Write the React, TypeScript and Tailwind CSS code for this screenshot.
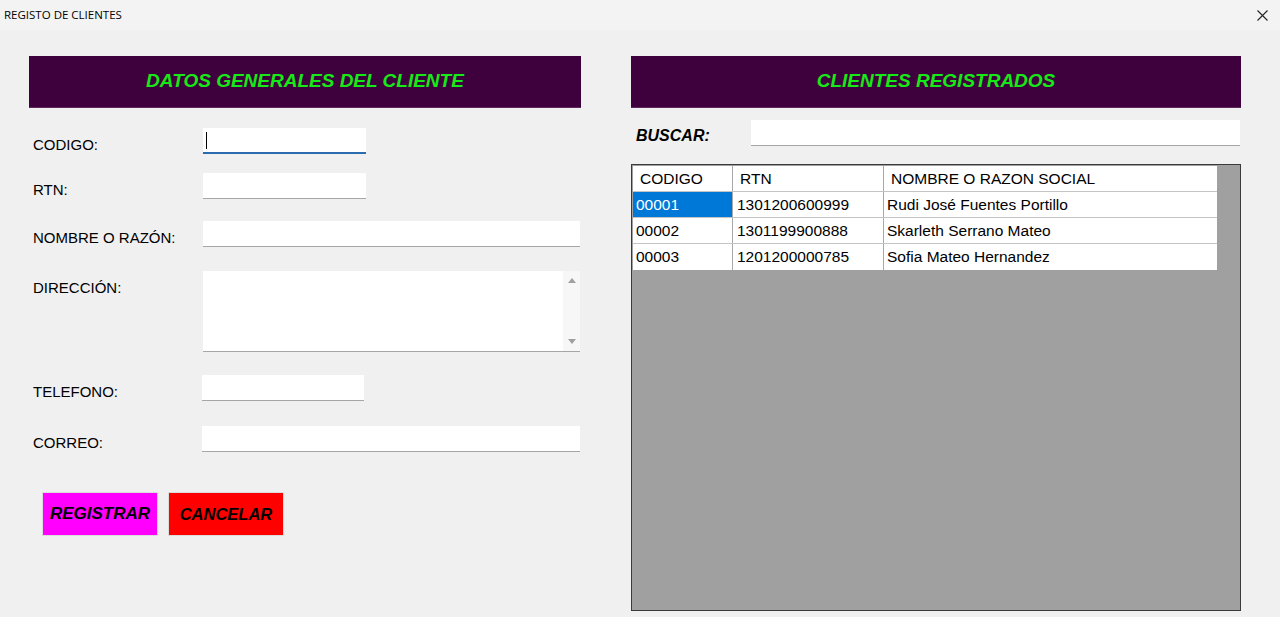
import React from "react";

const FONT = { fontFamily: '"Liberation Sans", Arial, sans-serif' };

function Field({ w, blue, ml = 0 }: { w: number; blue?: boolean; ml?: number }) {
  return (
    <div
      className={`h-[26px] bg-white ${blue ? "border-b-2 border-[#2b6cb0]" : "border-b border-[#a6a6a6]"} relative`}
      style={{ width: w, marginLeft: ml }}
    >
      {blue && <div className="absolute left-[3px] top-[4px] w-px h-[17px] bg-black" />}
    </div>
  );
}

function Row({ label, children, mt }: { label: string; children: React.ReactNode; mt: string }) {
  return (
    <div className={`flex items-start ${mt}`}>
      <div className="w-[174px] pl-[4px] pt-[8px] text-[15px] leading-[18px] text-black">{label}</div>
      {children}
    </div>
  );
}

const rows = [
  ["00001", "1301200600999", "Rudi José Fuentes Portillo"],
  ["00002", "1301199900888", "Skarleth Serrano Mateo"],
  ["00003", "1201200000785", "Sofia Mateo Hernandez"],
];

export default function App() {
  return (
    <div className="w-[1280px] h-[617px] bg-[#f0f0f0] overflow-hidden flex flex-col" style={FONT}>
      <div className="h-[30px] bg-[#f3f3f3] flex items-center justify-between pl-[4px] pr-[12px]">
        <span className="text-[11.5px] text-black" style={{ fontFamily: '"Open Sans", "Liberation Sans", sans-serif' }}>
          REGISTO DE CLIENTES
        </span>
        <svg width="11" height="11" viewBox="0 0 11 11" className="text-[#222]">
          <path d="M0.5 0.5 L10.5 10.5 M10.5 0.5 L0.5 10.5" stroke="currentColor" strokeWidth="1.1" />
        </svg>
      </div>
      <div className="flex pl-[29px] pt-[26px] gap-[50px]">
        {/* left */}
        <div className="w-[552px] flex flex-col">
          <div className="h-[52px] bg-[#3f003e] border-b border-[#5a2a58] flex items-center justify-center">
            <span className="text-[19px] font-bold italic text-[#16ea16]">DATOS GENERALES DEL CLIENTE</span>
          </div>
          <Row label="CODIGO:" mt="mt-[20px]">
            <Field w={163} blue />
          </Row>
          <Row label="RTN:" mt="mt-[19px]">
            <Field w={163} />
          </Row>
          <Row label="NOMBRE O RAZÓN:" mt="mt-[22px]">
            <Field w={377} />
          </Row>
          <Row label="DIRECCIÓN:" mt="mt-[24px]">
            <div className="w-[377px] h-[81px] bg-white border-b border-[#a6a6a6] flex justify-end">
              <div className="w-[17px] h-full bg-[#f7f7f7] flex flex-col items-center justify-between py-[7px]">
                <svg width="8" height="5" viewBox="0 0 8 5">
                  <path d="M0 5 L4 0 L8 5 Z" fill="#a0a0a0" />
                </svg>
                <svg width="8" height="5" viewBox="0 0 8 5">
                  <path d="M0 0 L4 5 L8 0 Z" fill="#a0a0a0" />
                </svg>
              </div>
            </div>
          </Row>
          <Row label="TELEFONO:" mt="mt-[23px]">
            <Field w={162} ml={-1} />
          </Row>
          <Row label="CORREO:" mt="mt-[25px]">
            <Field w={378} ml={-1} />
          </Row>
          <div className="flex gap-[10px] mt-[40px] ml-[13px]">
            <div className="w-[116px] h-[44px] bg-[#ff00ff] border border-[#dcdcdc] flex items-center justify-center">
              <span className="text-[17px] font-bold italic text-black">REGISTRAR</span>
            </div>
            <div className="w-[116px] h-[44px] bg-[#ff0000] border border-[#dcdcdc] flex items-center justify-center">
              <span className="text-[16.5px] font-bold italic text-black">CANCELAR</span>
            </div>
          </div>
        </div>
        {/* right */}
        <div className="w-[610px] flex flex-col">
          <div className="h-[52px] bg-[#3f003e] border-b border-[#5a2a58] flex items-center justify-center">
            <span className="text-[19px] font-bold italic text-[#16ea16]">CLIENTES REGISTRADOS</span>
          </div>
          <div className="flex items-start mt-[12px]">
            <div className="w-[120px] pl-[5px] pt-[7px] text-[16px] leading-[18px] font-bold italic text-black">BUSCAR:</div>
            <div className="w-[489px] h-[26px] bg-white border-b border-[#a6a6a6]" />
          </div>
          <div className="mt-[18px] h-[447px] bg-[#a0a0a0] border border-[#3a3a3a] p-[1px]">
            <div className="w-[584px] bg-white text-[15.5px] leading-[18px] text-black">
              <div className="flex h-[26px] border-b border-[#c4c4c4]">
                <div className="w-[100px] pl-[7px] flex items-center border-r border-[#a8a8a8]">CODIGO</div>
                <div className="w-[151px] pl-[7px] flex items-center border-r border-[#a8a8a8]">RTN</div>
                <div className="flex-1 pl-[7px] flex items-center">NOMBRE O RAZON SOCIAL</div>
              </div>
              {rows.map((r, i) => (
                <div key={i} className={`flex h-[26px] ${i < 2 ? "border-b border-[#c4c4c4]" : ""}`}>
                  <div
                    className={`w-[100px] pl-[3px] flex items-center border-r border-[#a8a8a8] ${i === 0 ? "bg-[#0078d7] text-white" : ""}`}
                  >
                    {r[0]}
                  </div>
                  <div className="w-[151px] pl-[4px] flex items-center border-r border-[#a8a8a8]">{r[1]}</div>
                  <div className="flex-1 pl-[3px] flex items-center">{r[2]}</div>
                </div>
              ))}
            </div>
          </div>
        </div>
      </div>
    </div>
  );
}
